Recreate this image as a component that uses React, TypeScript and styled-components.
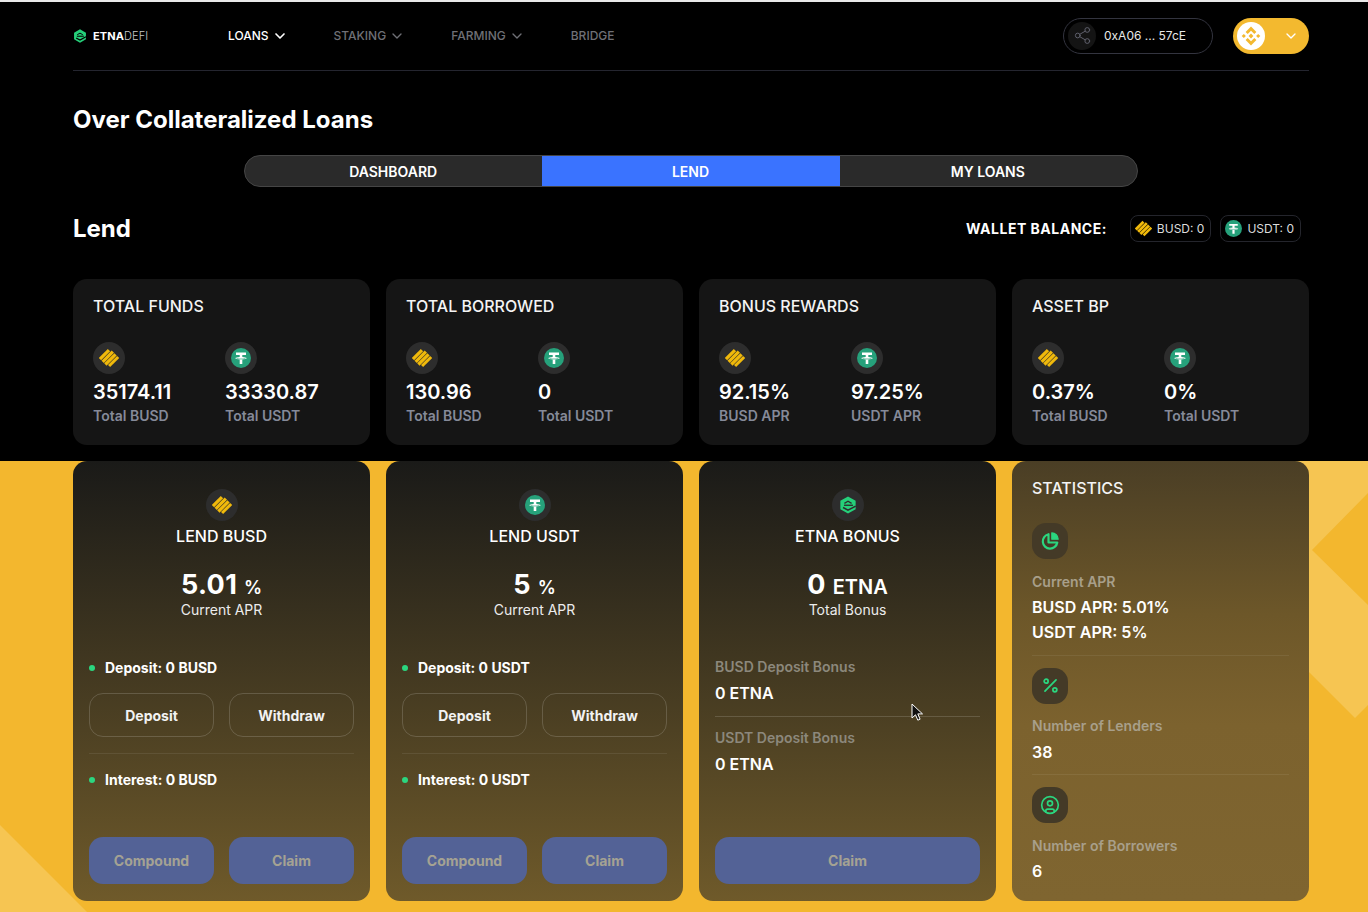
import React from "react";
import styled, { createGlobalStyle } from "styled-components";
import { ChevronDown, Share2, Percent, CircleUser } from "lucide-react";

const Global = createGlobalStyle`
  html, body { margin: 0; padding: 0; background: #000; }
  body { font-family: Inter, "Liberation Sans", sans-serif; color: #fff; width: 1368px; height: 912px; overflow: hidden; }
  * { box-sizing: border-box; }
`;

const Page = styled.div`
  position: relative;
  width: 1368px;
  height: 912px;
  overflow: hidden;
  display: flex;
  flex-direction: column;
  border-top: 2px solid #e8e8e8;
`;
const Top = styled.section`
  height: 459px;
  background: #000;
  padding: 0 59px 0 73px;
`;
const Bottom = styled.section`
  position: relative;
  flex: 1;
  background: #f3b72e;
  padding: 0 59px 0 73px;
`;
const Decor = styled.svg`
  position: absolute;
  left: 0;
  top: 0;
`;
const Header = styled.header`
  height: 69px;
  display: flex;
  align-items: center;
  border-bottom: 1px solid #24252f;
  padding-bottom: 1px;
`;
const Logo = styled.div`
  width: 155px;
  display: flex;
  align-items: center;
  gap: 6px;
  font-size: 11px;
  font-weight: 700;
  letter-spacing: 0.1px;
  svg { flex: none; }
  span span { font-weight: 300; color: #c8c8c8; }
`;
const Nav = styled.nav`
  display: flex;
  gap: 46px;
  flex: 1;
`;
const NavItem = styled.div<{ $active?: boolean }>`
  display: flex;
  align-items: center;
  gap: 3px;
  font-size: 12px;
  font-weight: 500;
  color: ${(p) => (p.$active ? "#ffffff" : "#6f7076")};
`;
const Wallet = styled.div`
  width: 150px;
  height: 36px;
  border: 1px solid #33343f;
  border-radius: 18px;
  display: flex;
  align-items: center;
  padding-left: 4px;
  gap: 8px;
  font-size: 12px;
  font-weight: 400;
  color: #e8e8e8;
`;
const WalletIcon = styled.div`
  width: 28px;
  height: 28px;
  border-radius: 50%;
  background: #141414;
  display: flex;
  align-items: center;
  justify-content: center;
  color: #5f606c;
`;
const Chain = styled.div`
  margin-left: 20px;
  width: 76px;
  height: 36px;
  border-radius: 18px;
  background: #f3b92f;
  display: flex;
  align-items: center;
  padding: 0 10px 0 4px;
  justify-content: space-between;
  color: #fff;
`;
const Title = styled.h1`
  margin: 0;
  padding-top: 34px;
  height: 84px;
  font-size: 24px;
  line-height: 29px;
  font-weight: 700;
`;
const Tabs = styled.div`
  width: 894px;
  height: 32px;
  margin-left: 171px;
  display: grid;
  grid-template-columns: repeat(3, 1fr);
  background: #2a2a2a;
  border: 1px solid #454545;
  border-radius: 16px;
  overflow: hidden;
`;
const Tab = styled.div<{ $active?: boolean }>`
  display: flex;
  align-items: center;
  justify-content: center;
  font-size: 14px;
  font-weight: 600;
  margin: -1px 0;
  padding-right: 1px;
  background: ${(p) => (p.$active ? "#3a73ff" : "transparent")};
`;
const LendRow = styled.div`
  display: flex;
  align-items: center;
  height: 27px;
  margin-top: 28px;
  padding-right: 8px;
`;
const LendTitle = styled.h2`
  margin: 0;
  flex: 1;
  font-size: 24px;
  font-weight: 700;
`;
const BalanceLabel = styled.div`
  font-size: 14px;
  font-weight: 700;
  letter-spacing: 0.5px;
  margin-right: 14px;
`;
const Pill = styled.div`
  height: 27px;
  border: 1px solid #24252c;
  border-radius: 8px;
  display: flex;
  align-items: center;
  gap: 5px;
  padding: 0 6px 0 4px;
  font-size: 12px;
  color: #dcdcdc;
  margin-left: 9px;
`;
const Grid = styled.div`
  display: grid;
  grid-template-columns: repeat(4, 297px);
  gap: 16px;
`;
const StatGrid = styled(Grid)`
  margin-top: 37px;
`;
const StatCard = styled.div`
  height: 166px;
  background: #151515;
  border-radius: 14px;
  padding: 17px 20px 0;
`;
const StatTitle = styled.div`
  font-size: 16px;
  line-height: 20px;
  font-weight: 500;
  color: #f4f4f4;
`;
const StatCols = styled.div`
  display: grid;
  grid-template-columns: 132px 1fr;
  margin-top: 26px;
`;
const Circle = styled.div`
  width: 32px;
  height: 32px;
  border-radius: 50%;
  background: #2d2d2d;
  display: flex;
  align-items: center;
  justify-content: center;
`;
const StatValue = styled.div`
  font-size: 20px;
  line-height: 24px;
  font-weight: 600;
  margin-top: 6px;
`;
const StatLabel = styled.div`
  font-size: 14px;
  line-height: 17px;
  font-weight: 600;
  color: #858a99;
  margin-top: 2.5px;
`;
const BottomGrid = styled(Grid)`
  position: relative;
`;
const Card = styled.div`
  height: 440px;
  border-radius: 14px;
  padding: 28px 16px 17px;
  display: flex;
  flex-direction: column;
  background: linear-gradient(180deg, #1a1a18 0%, rgba(40, 40, 40, 0.65) 100%);
`;
const CardHead = styled.div`
  display: flex;
  flex-direction: column;
  align-items: center;
`;
const CardTitle = styled.div`
  margin-top: 5px;
  font-size: 16px;
  line-height: 20px;
  font-weight: 500;
`;
const Big = styled.div`
  margin-top: 25px;
  height: 30px;
  font-size: 27px;
  line-height: 27px;
  letter-spacing: 0.4px;
  font-weight: 700;
`;
const Unit = styled.span<{ $size: number }>`
  font-size: ${(p) => p.$size}px;
  font-weight: 600;
  letter-spacing: 0;
`;
const Sub = styled.div`
  font-size: 14px;
  line-height: 17px;
  color: #ececec;
`;
const Bullet = styled.div`
  display: flex;
  align-items: center;
  gap: 10px;
  height: 17px;
  font-size: 14px;
  font-weight: 700;
  &::before {
    content: "";
    width: 6px;
    height: 6px;
    border-radius: 50%;
    background: #2bd67f;
  }
`;
const BulletTop = styled(Bullet)`
  margin-top: 41px;
`;
const Buttons = styled.div<{ $single?: boolean }>`
  display: grid;
  grid-template-columns: ${(p) => (p.$single ? "1fr" : "125px 125px")};
  gap: 15px;
`;
const ButtonsUp = styled(Buttons)`
  margin-top: 17px;
`;
const ButtonsDown = styled(Buttons)`
  margin-top: auto;
`;
const Outline = styled.button`
  height: 44px;
  font: 700 14px Inter, sans-serif;
  color: #f2f2f2;
  background: transparent;
  border: 1px solid rgba(255, 255, 255, 0.16);
  border-radius: 14px;
`;
const Solid = styled.button`
  height: 47px;
  font: 700 14px Inter, sans-serif;
  color: #a5a293;
  background: #536296;
  border: none;
  border-radius: 14px;
`;
const Rule = styled.div`
  height: 1px;
  background: rgba(255, 255, 255, 0.08);
  margin-top: 16px;
  margin-bottom: 17px;
`;
const Muted = styled.div`
  font-size: 14px;
  line-height: 17px;
  font-weight: 600;
  color: #8c887c;
`;
const Strong = styled.div`
  font-size: 16px;
  line-height: 20px;
  font-weight: 600;
  margin-top: 8px;
`;
const BonusList = styled.div`
  margin-top: 40px;
`;
const BonusRule = styled.div`
  height: 1px;
  background: rgba(255, 255, 255, 0.15);
  margin: 13px 0 12px;
`;
const StatsCard = styled.div`
  height: 440px;
  border-radius: 14px;
  padding: 17px 20px 0;
  background: linear-gradient(180deg, #4a3e25 0%, #6d5729 35%, #7c622e 60%, #7f6530 100%);
`;
const Squircle = styled.div`
  width: 36px;
  height: 36px;
  border-radius: 14px;
  background: #443a27;
  color: #2bd67f;
  display: flex;
  align-items: center;
  justify-content: center;
`;
const StatsTitle = styled(StatTitle)`
  margin-bottom: 25px;
`;
const StatsLabel = styled.div`
  font-size: 14px;
  line-height: 17px;
  font-weight: 600;
  color: #a89f8a;
  margin-top: 13.5px;
`;
const StatsRule = styled.div`
  height: 1px;
  background: rgba(255, 255, 255, 0.07);
  margin: 12.5px 0 12px;
`;
const StatsValue = styled.div`
  font-size: 16px;
  line-height: 20px;
  font-weight: 600;
  margin-top: 7.5px;
  & + & { margin-top: 5px; }
`;
const Cursor = styled.svg`
  position: absolute;
  left: 911px;
  top: 701px;
  z-index: 5;
`;

const Busd = ({ size = 20 }: { size?: number }) => (
  <svg width={size} height={size} viewBox="0 0 20 20" fill="#f0b90b">
    <g transform="rotate(45 10 10)">
      <rect x="2.800" y="4.500" width="3.300" height="12.700" />
      <rect x="6.600" y="2.800" width="3.300" height="14.400" />
      <rect x="10.400" y="2.800" width="3.300" height="14.400" />
      <rect x="14.200" y="2.800" width="3" height="12.800" />
    </g>
  </svg>
);
const Usdt = ({ size = 20 }: { size?: number }) => (
  <svg width={size} height={size} viewBox="0 0 20 20">
    <circle cx="10" cy="10" r="10" fill="#26a17b" />
    <path d="M5 4.600h10v2.300h-3.700V9c2.200.1 4.300.6 4.300 1.200s-2.100 1.100-4.300 1.200v4.700H8.700v-4.700c-2.200-.1-4.300-.6-4.300-1.200S6.500 9.100 8.700 9V6.900H5z" fill="#fff" />
    <path d="M5.500 10.200c.8.5 2.500.8 4.500.8s3.700-.3 4.500-.8" stroke="#26a17b" strokeWidth=".7" fill="none" />
  </svg>
);
const EtnaMark = ({ size = 14, cut = "#000" }: { size?: number; cut?: string }) => (
  <svg width={size} height={size} viewBox="0 0 20 20" fill="none">
    <path d="M10 0.500L18.500 5.200V14.800L10 19.500L1.500 14.800V5.200z" fill="#25d07a" />
    <path d="M6 8.200L10 5.900L14 8.200" stroke={cut} strokeWidth="1.400" fill="none" />
    <path d="M5.500 10.300H15.500" stroke={cut} strokeWidth="1.500" />
    <path d="M4.500 12.800L10 15.800L18.500 11.200" stroke={cut} strokeWidth="1.700" fill="none" />
  </svg>
);
const Bnb = () => (
  <svg width="28" height="28" viewBox="0 0 28 28">
    <circle cx="14" cy="14" r="14" fill="#fff" />
    <g fill="#f3b92f">
      <path d="M14 4.500l5.400 5.400-2.100 2.100L14 8.700l-3.300 3.300-2.100-2.100z" />
      <path d="M14 23.500l-5.400-5.400 2.100-2.100 3.300 3.300 3.300-3.300 2.100 2.100z" />
      <path d="M14 11.600l2.400 2.400-2.400 2.400-2.400-2.400z" />
      <path d="M6.800 11.900l2.100 2.100-2.100 2.100L4.700 14z" />
      <path d="M21.200 11.900l2.100 2.100-2.100 2.100-2.100-2.100z" />
    </g>
  </svg>
);
const Pie = () => (
  <svg width="20" height="20" viewBox="0 0 20 20" fill="none" stroke="currentColor" strokeWidth="2.200" strokeLinejoin="round">
    <path d="M8.500 3.200A7.300 7.300 0 1 0 17.300 11.500H8.500z" />
    <path d="M11.800 1.800A6.500 6.500 0 0 1 18.200 8.200H11.800z" fill="currentColor" strokeWidth="1.200" />
  </svg>
);

const stats = [
  { t: "TOTAL FUNDS", a: "35174.11", b: "33330.87", la: "Total BUSD", lb: "Total USDT" },
  { t: "TOTAL BORROWED", a: "130.96", b: "0", la: "Total BUSD", lb: "Total USDT" },
  { t: "BONUS REWARDS", a: "92.15%", b: "97.25%", la: "BUSD APR", lb: "USDT APR" },
  { t: "ASSET BP", a: "0.37%", b: "0%", la: "Total BUSD", lb: "Total USDT" },
];

const LendCard = ({ coin, apr, icon }: { coin: string; apr: string; icon: React.ReactNode }) => (
  <Card>
    <CardHead>
      <Circle>{icon}</Circle>
      <CardTitle>LEND {coin}</CardTitle>
      <Big>{apr} <Unit $size={18}>%</Unit></Big>
      <Sub>Current APR</Sub>
    </CardHead>
    <BulletTop>Deposit: 0 {coin}</BulletTop>
    <ButtonsUp>
      <Outline>Deposit</Outline>
      <Outline>Withdraw</Outline>
    </ButtonsUp>
    <Rule />
    <Bullet>Interest: 0 {coin}</Bullet>
    <ButtonsDown>
      <Solid>Compound</Solid>
      <Solid>Claim</Solid>
    </ButtonsDown>
  </Card>
);

export default function App() {
  return (
    <Page>
      <Global />
      <Top>
        <Header>
          <Logo>
            <EtnaMark />
            <span>ETNA<span>DEFI</span></span>
          </Logo>
          <Nav>
            <NavItem $active>LOANS <ChevronDown size={16} strokeWidth={2.5} /></NavItem>
            <NavItem>STAKING <ChevronDown size={16} strokeWidth={2} /></NavItem>
            <NavItem>FARMING <ChevronDown size={16} strokeWidth={2} /></NavItem>
            <NavItem>BRIDGE</NavItem>
          </Nav>
          <Wallet>
            <WalletIcon><Share2 size={19} strokeWidth={1.25} /></WalletIcon>
            0xA06 ... 57cE
          </Wallet>
          <Chain>
            <Bnb />
            <ChevronDown size={16} strokeWidth={2} />
          </Chain>
        </Header>
        <Title>Over Collateralized Loans</Title>
        <Tabs>
          <Tab>DASHBOARD</Tab>
          <Tab $active>LEND</Tab>
          <Tab>MY LOANS</Tab>
        </Tabs>
        <LendRow>
          <LendTitle>Lend</LendTitle>
          <BalanceLabel>WALLET BALANCE:</BalanceLabel>
          <Pill><Busd size={17} />BUSD: 0</Pill>
          <Pill><Usdt size={17} />USDT: 0</Pill>
        </LendRow>
        <StatGrid>
          {stats.map((s) => (
            <StatCard key={s.t}>
              <StatTitle>{s.t}</StatTitle>
              <StatCols>
                <div>
                  <Circle><Busd /></Circle>
                  <StatValue>{s.a}</StatValue>
                  <StatLabel>{s.la}</StatLabel>
                </div>
                <div>
                  <Circle><Usdt /></Circle>
                  <StatValue>{s.b}</StatValue>
                  <StatLabel>{s.lb}</StatLabel>
                </div>
              </StatCols>
            </StatCard>
          ))}
        </StatGrid>
      </Top>
      <Bottom>
        <Decor width="1368" height="451" viewBox="0 461 1368 451">
          <path d="M0 825L87 912H0z" fill="#f6c552" />
          <path d="M1295 461H1368V493L1312 550L1368 605V705L1355 718L1295 658z" fill="#f6c552" />
        </Decor>
        <BottomGrid>
          <LendCard coin="BUSD" apr="5.01" icon={<Busd />} />
          <LendCard coin="USDT" apr="5" icon={<Usdt />} />
          <Card>
            <CardHead>
              <Circle><EtnaMark size={18} cut="#2d2d2d" /></Circle>
              <CardTitle>ETNA BONUS</CardTitle>
              <Big>0 <Unit $size={20}>ETNA</Unit></Big>
              <Sub>Total Bonus</Sub>
            </CardHead>
            <BonusList>
              <Muted>BUSD Deposit Bonus</Muted>
              <Strong>0 ETNA</Strong>
              <BonusRule />
              <Muted>USDT Deposit Bonus</Muted>
              <Strong>0 ETNA</Strong>
            </BonusList>
            <ButtonsDown $single>
              <Solid>Claim</Solid>
            </ButtonsDown>
          </Card>
          <StatsCard>
            <StatsTitle>STATISTICS</StatsTitle>
            <Squircle><Pie /></Squircle>
            <StatsLabel>Current APR</StatsLabel>
            <StatsValue>BUSD APR: 5.01%</StatsValue>
            <StatsValue>USDT APR: 5%</StatsValue>
            <StatsRule />
            <Squircle><Percent size={19} strokeWidth={2.2} /></Squircle>
            <StatsLabel>Number of Lenders</StatsLabel>
            <StatsValue>38</StatsValue>
            <StatsRule />
            <Squircle><CircleUser size={20} strokeWidth={2} /></Squircle>
            <StatsLabel>Number of Borrowers</StatsLabel>
            <StatsValue>6</StatsValue>
          </StatsCard>
        </BottomGrid>
      </Bottom>
      <Cursor width="13" height="19" viewBox="0 0 13 19">
        <path d="M1 1v14l3.500-3.200 2.300 5.400 2.300-1-2.300-5.300h4.700z" fill="#111" stroke="#fff" strokeWidth="1" />
      </Cursor>
    </Page>
  );
}
